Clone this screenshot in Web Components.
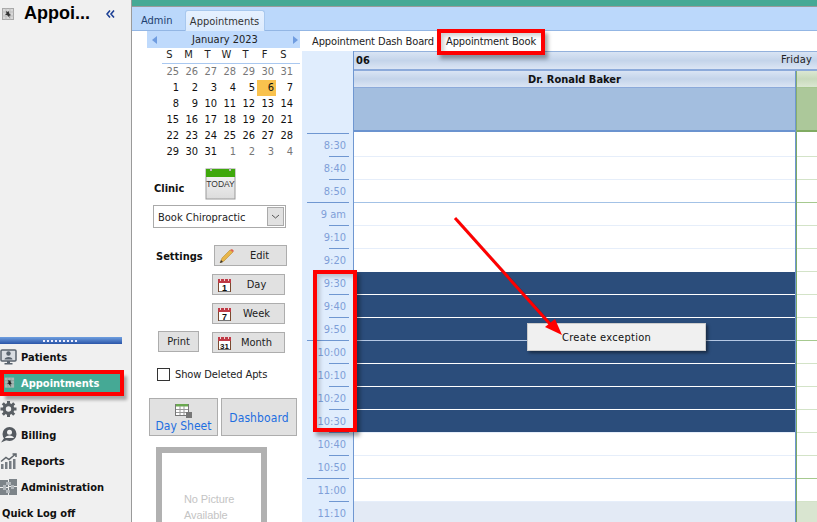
<!DOCTYPE html>
<html><head><meta charset="utf-8"><style>
html,body{margin:0;padding:0;height:100%;overflow:hidden;background:#fff}
body{font:11px "DejaVu Sans Condensed","DejaVu Sans",sans-serif;color:#111}
</style></head><body>
<app-shell></app-shell>
<script>
const $=(h)=>{const t=document.createElement('template');t.innerHTML=h;return t.content};
class Base extends HTMLElement{constructor(){super();this.attachShadow({mode:'open'}).append($(this.html()))}}
const F='"DejaVu Sans Condensed","DejaVu Sans",sans-serif';
const mosaic=`<rect x=".5" y=".5" width="11" height="11" fill="#d8d8d8" stroke="#a8a8a8"/><path d="M4 .5v11M8 .5v11M.5 4h11M.5 8h11" stroke="#bdbdbd"/><path d="M4 3l1.500 1 1-1 1 3 1.500 1-2 1 1 2-3-3-2 0 1.500-1.500z" fill="#333"/>`;

class SideNav extends Base{html(){
const icons={
P:'<rect x="1" y="1" width="15" height="11" rx="1" fill="#d9dde2" stroke="#59636e" stroke-width="1.500"/><circle cx="8.500" cy="4.500" r="2.200" fill="#59636e"/><path d="M4.500 10.500c0-3.500 8-3.500 8 0z" fill="#59636e"/><rect x="7" y="12" width="3" height="2" fill="#59636e"/><rect x="4.500" y="14" width="8" height="1.500" fill="#59636e"/>',
A:'<rect x="1" y="1" width="12" height="13" fill="#a8b8b4"/><path d="M5 1v13M9 1v13M1 5h12M1 9h12" stroke="#88a09a"/><path d="M5 4l2 1 1-1 1 4 1 1-2 1 1 3-3-4-2 0 2-2z" fill="#222"/>',
R:'<circle cx="8.500" cy="8" r="4.300" fill="none" stroke="#5a5f64" stroke-width="3.200"/><g stroke="#5a5f64" stroke-width="3"><path d="M8.500 0v3M8.500 13v3M.5 8h3M13.500 8h3M2.800 2.300l2.200 2.200M12 11.500l2.200 2.200M14.200 2.300l-2.200 2.200M5 11.500l-2.200 2.200"/></g>',
B:'<circle cx="9.500" cy="7" r="7" fill="#555a60"/><circle cx="9.500" cy="5.300" r="2.500" fill="#f0f0f0"/><path d="M5 11c.8-3.500 8.200-3.500 9 0z" fill="#f0f0f0"/><path d="M4.500 10.500L1 15.500l6-2.500z" fill="#555a60"/>',
O:'<g fill="#777d83"><rect x="1" y="11" width="2.500" height="5"/><rect x="5" y="9" width="2.500" height="7"/><rect x="9" y="8" width="2.500" height="8"/><rect x="13" y="6" width="2.500" height="10"/></g><path d="M1 8.500l5-4 3 2 6-5M12.500 1h3.500v3" fill="none" stroke="#5f656b" stroke-width="1.500"/>',
D:'<g fill="#7d8489"><rect x="0" y="1" width="8" height="7"/><rect x="9" y="0" width="8" height="7"/><rect x="0" y="9" width="8" height="7"/><rect x="9" y="8" width="8" height="8"/></g><g fill="#b4b9bd"><rect x="6" y="3" width="5" height="3"/><rect x="3" y="6" width="3" height="5"/><rect x="11" y="6" width="3" height="4"/><rect x="6" y="11" width="4" height="3"/></g>'};
const row=(k,t,c='')=>`<div class="row ${c}"><svg width="18" height="16" viewBox="0 0 18 16">${icons[k]}</svg><span>${t}</span></div>`;
return `<style>
:host{display:flex;flex-direction:column;width:131px;height:100%;background:#f0f0f0;border-right:1px solid #9a9a9a;flex:none;box-sizing:content-box}
.head{display:flex;align-items:center;height:24px;padding:0 0 0 2px;margin-top:1px;font:700 18px "Liberation Sans",sans-serif;color:#000}
.head b{margin-left:10px;flex:1}
.head svg.c{margin-right:16px;margin-top:2px}
.grow{flex:1}
.split{height:7px;width:122px;background:linear-gradient(#6f9fe0,#2a55a8);display:flex;justify-content:center;align-items:center;flex:none}
.split u{width:36px;height:2px;background:repeating-linear-gradient(90deg,#eef 0 2px,transparent 2px 4px)}
.row{height:26px;display:flex;align-items:center;gap:3px;box-sizing:border-box;font:700 11px ${F};color:#111;flex:none}
.row.on{background:#45a995;color:#fff;margin:4px;height:18px;width:116px;box-shadow:0 0 0 4px #f00,4px 5px 3px 3px rgba(0,0,0,.3)}
.row.on svg{width:14px;margin-left:0}
.q{padding-left:2px;margin-bottom:-4px}
</style>
<div class="head"><svg width="12" height="12" viewBox="0 0 12 12" style="margin-top:2px">${mosaic}</svg><b>Appoi...</b><svg class="c" width="9" height="8" viewBox="0 0 9 8"><path d="M4 .5L1 4l3 3.500M8 .5L5 4l3 3.500" fill="none" stroke="#1b3f94" stroke-width="1.600"/></svg></div>
<div class="grow"></div>
<div class="split"><u></u></div>
${row('P','Patients')}${row('A','Appointments','on')}${row('R','Providers')}${row('B','Billing')}${row('O','Reports')}${row('D','Administration')}
<div class="row q">Quick Log off</div>`}}
customElements.define('side-nav',SideNav);

class TopTabs extends Base{html(){return `<style>
:host{display:block;flex:none}
.teal{height:6px;background:#45a995;border-bottom:1px solid #9a9a9a}
.strip{height:23px;background:#bbd8fb;border-bottom:1px solid #93b6e4;display:flex;align-items:flex-end;padding-left:2px;color:#1d3f6f;font:11px ${F}}
.t{height:20px;display:flex;align-items:center;padding:1px 7px 0;box-sizing:border-box}
.t.on{background:linear-gradient(#e6f1ff,#dcebfd);border:1px solid #a8c8ee;border-bottom:none;border-radius:3px 3px 0 0;margin-bottom:-1px;padding:1px 0 0;justify-content:center;width:80px;margin-left:5px;height:21px;color:#333}
</style><div class="teal"></div><div class="strip"><div class="t">Admin</div><div class="t on">Appointments</div></div>`}}
customElements.define('top-tabs',TopTabs);

class MiniCal extends Base{html(){
const d=[25,26,27,28,29,30,31,1,2,3,4,5,6,7,8,9,10,11,12,13,14,15,16,17,18,19,20,21,22,23,24,25,26,27,28,29,30,31,1,2,3,4];
const cells=d.map((n,i)=>`<span class="${(i<7||i>37)?'o':''} ${i==12?'s':''}">${n}</span>`).join('');
const dow='SMTWTFS'.split('').map(x=>`<span>${x}</span>`).join('');
return `<style>
:host{display:block;width:153px;margin-left:15px;font:11px ${F}}
.h{height:17px;background:#bfdafc;display:flex;align-items:center;justify-content:space-between;padding:0 2px 0 5px;color:#222}
.h svg{display:block}
.dow{display:grid;grid-template-columns:repeat(7,19px);margin-left:15px;border-bottom:1px solid #a9c8f0;height:15px;line-height:14px;text-align:center;color:#222}
.dow span{padding-right:4px}
.grid{display:grid;grid-template-columns:repeat(7,19px);grid-auto-rows:16px;margin-left:15px;text-align:right;line-height:16px;color:#111}
.grid span{padding-right:2px}
.o{color:#777}.s{background:#f9c24e}
</style><div class="h"><svg width="5" height="8"><path d="M5 0v8L0 4z" fill="#6f9ce0"/></svg><span>January 2023</span><svg width="5" height="8"><path d="M0 0v8l5-4z" fill="#6f9ce0"/></svg></div>
<div class="dow">${dow}</div><div class="grid">${cells}</div>`}}
customElements.define('mini-cal',MiniCal);

class ToolBtn extends Base{html(){return `<style>
:host{display:flex;align-items:center;box-sizing:border-box;background:#e1e1e1;border:1px solid #adadad;color:#222;font:11px ${F};height:21px}
</style><slot></slot>`}}
customElements.define('tool-btn',ToolBtn);

class LeftPanel extends Base{html(){
const bt=(ic,t)=>`<tool-btn style="width:73px;padding-left:4px">${ic}<span style="flex:1;text-align:center;padding-right:3px">${t}</span></tool-btn>`;
const cIc=n=>`<svg width="15" height="14" viewBox="0 0 15 14" style="flex:none"><rect x="1" y="2" width="13" height="12" fill="#fff"/><rect x="1" y="1" width="13" height="4" fill="#bf3a46"/><g fill="#f0d8d8"><rect x="3" y="0" width="1" height="3"/><rect x="7" y="0" width="1" height="3"/><rect x="11" y="0" width="1" height="3"/></g><rect x="1" y="5" width="1" height="9" fill="#7a4a30"/><rect x="13" y="5" width="1" height="9" fill="#7a4a30"/><rect x="2" y="13" width="11" height="1" fill="#777"/><text x="7.500" y="13" text-anchor="middle" font-family="Liberation Sans" font-weight="700" font-size="${n>9?8:9}" fill="#111">${n}</text></svg>`;
return `<style>
:host{display:block;width:170px;flex:none;background:#fff;overflow:hidden;font:11px ${F};color:#222}
.clinic{display:flex;height:36px;margin-top:6px;padding-left:22px;align-items:center}
.clinic b{width:35px;font-weight:700;color:#111;margin-top:8px;margin-right:16px}
.sel{margin:3px 0 0 21px;width:133px;height:23px;box-sizing:border-box;border:1px solid #aaa;display:flex;align-items:center;padding-left:4px;justify-content:space-between;background:#fff;color:#222}
.sel span{padding-top:2px}
.sel u{text-decoration:none;width:17px;height:19px;background:#e1e1e1;border:1px solid #aaa;box-sizing:border-box;margin-right:1px;display:flex;align-items:center;justify-content:center}
.set{display:flex;align-items:center;margin:17px 0 0 24px;height:21px}
.set b{color:#111;width:58px;margin-top:2px}
.r{display:flex;justify-content:flex-end;margin:8px 0 0;padding-right:17px}
.r.p{justify-content:space-between;padding-left:26px;align-items:flex-start}
.chk{display:flex;align-items:center;gap:5px;margin:15px 0 0 25px;height:13px;letter-spacing:-.1px}
.chk i{width:13px;height:13px;border:1px solid #333;box-sizing:border-box;background:#fff}
.bb{display:flex;gap:3px;margin:17px 0 0 17px}
.bb div{background:#e1e1e1;border:1px solid #adadad;box-sizing:border-box;height:38px;color:#1d6ee0;font-size:12px;display:flex;flex-direction:column;align-items:center;justify-content:center}
.pic{margin:11px 0 0 24px;width:111px;height:90px;box-sizing:border-box;border:6px solid #b1b1b1;border-bottom:none;color:#c4c4c4;font:11px/16px "Liberation Sans",sans-serif;padding:38px 0 0 22px;background:#fff;letter-spacing:-.1px}
</style>
<mini-cal></mini-cal>
<div class="clinic"><b>Clinic</b><svg width="31" height="32" viewBox="0 0 31 32"><defs><linearGradient id="g" x1="0" y1="0" x2="0" y2="1"><stop offset="0" stop-color="#f8f8f8"/><stop offset="1" stop-color="#dcdcdc"/></linearGradient></defs><rect x="1" y="1" width="29" height="30" fill="url(#g)" stroke="#999"/><rect x="1" y="1" width="29" height="8" fill="#3fa80c"/><rect x="5" y="0" width="2" height="3" fill="#bbb"/><rect x="24" y="0" width="2" height="3" fill="#bbb"/><text x="15.500" y="19" text-anchor="middle" font-family="Liberation Sans" font-size="8.500" fill="#333">TODAY</text></svg></div>
<div class="sel"><span>Book Chiropractic</span><u><svg width="9" height="5"><path d="M1 1l3.500 3L8 1" fill="none" stroke="#555"/></svg></u></div>
<div class="set"><b>Settings</b><tool-btn style="width:73px;padding-left:4px"><svg width="16" height="14" viewBox="0 0 16 14" style="flex:none"><path d="M1 14l2-5 8-8 3 2-9 9z" fill="#e8b64a" stroke="#b08020" stroke-width=".5"/><path d="M11 1l2-1 2 2-1 1z" fill="#e0604c"/><path d="M1 14l1-3 2 2z" fill="#333"/></svg><span style="flex:1;text-align:center;padding-right:2px">Edit</span></tool-btn></div>
<div class="r">${bt(cIc(1),'Day')}</div>
<div class="r">${bt(cIc(7),'Week')}</div>
<div class="r p"><tool-btn style="width:41px;justify-content:center;margin-top:-1px">Print</tool-btn>${bt(cIc(31),'Month')}</div>
<div class="chk"><i></i><span>Show Deleted Apts</span></div>
<div class="bb"><div style="width:69px;justify-content:flex-start;padding-top:4px"><svg width="17" height="15" viewBox="0 0 17 15" style="flex:none"><rect x=".5" y="1.500" width="13" height="11" fill="#fff" stroke="#777"/><rect x="1" y="1" width="12" height="2.500" fill="#6aa84f"/><path d="M1 6.500h12M1 9.500h12M5 3v9M9 3v9" stroke="#999"/><rect x="11" y="9" width="6" height="6" fill="#777"/></svg><span style="line-height:14px;margin-top:1px">Day Sheet</span></div><div style="width:76px;padding-top:1px;letter-spacing:.1px">Dashboard</div></div>
<div class="pic">No Picture<br>Available</div>`}}
customElements.define('left-panel',LeftPanel);

class SchedGrid extends Base{html(){
const labels=['8:30','8:40','8:50','9 am','9:10','9:20','9:30','9:40','9:50','10:00','10:10','10:20','10:30','10:40','10:50','11:00','11:10'];
const hour=i=>labels[i].endsWith(':00')||labels[i]=='9 am'||i==0;
const times=labels.map((l,i)=>`<div class="tm ${hour(i)?'hr':''}">${l}</div>`).join('');
const rows=labels.map((l,i)=>{const sel=i>=6&&i<=12,off=i==16;const h=hour(i);
return `<div class="rw ${sel?'sel':''} ${off?'off':''} ${h?'hr':''} ${i==6?'f':''} ${i==0?'first':''}"><div class="m"></div><div class="g"></div></div>`}).join('');
return `<style>
:host{display:block;flex:1;position:relative;font:11px ${F};min-width:0}
.tabs{height:20px;display:flex;align-items:center;padding:1px 0 0 10px;gap:12px;color:#222;background:#fff;box-sizing:border-box;letter-spacing:-.12px}
.tabs span:first-child{width:122px;flex:none;white-space:nowrap}
.body{display:flex;height:471px;overflow:hidden}
.times{width:51px;background:#e0edfd;border-right:1px solid #6f97d1;flex:none;padding-top:82px;box-sizing:content-box}
.tm{height:23px;box-sizing:border-box;border-top:1px solid transparent;color:#7f9fd8;text-align:right;padding-right:7px;line-height:24px;position:relative;font-size:11px}
.tm::before{content:"";position:absolute;right:4px;top:-1px;width:20px;height:1px;background:#6f97d1}
.tm.hr::before{width:42px}
.main{flex:1;min-width:0;display:flex;flex-direction:column}
.day{height:17px;flex:none;background:linear-gradient(#d9e4f4,#c4d4ea 50%,#dbe5f4);border-top:1px solid #93b1dc;border-bottom:2px solid #8caada;display:flex;justify-content:space-between;align-items:center;padding:0 5px 0 2px;color:#222}
.day b{font-weight:700;color:#111}
.day span{margin-top:-2px;letter-spacing:.2px}
.cols{display:flex;height:17px;flex:none}
.doc{flex:1;background:linear-gradient(#d9e4f4,#c4d4ea 50%,#dbe5f4);border-bottom:1px solid #8caada;text-align:center;font-weight:700;color:#111;line-height:18px}
.sep{width:2px;background:linear-gradient(90deg,#6f97d1 50%,#86ad6e 50%)}
.gc{width:20px;background:linear-gradient(#dbe7d2,#c8dabc 50%,#dbe7d2);border-bottom:1px solid #a6c590}
.all{display:flex;height:44px;flex:none}
.all .a{flex:1;background:#a3bedf;border-bottom:2px solid #6b93cf}
.all .gg{width:20px;background:#acc89a;border-bottom:2px solid #80ab62}
.rows{position:relative;flex:1;min-height:0;padding-top:1px}
.rw{height:23px;display:flex;box-sizing:border-box;border-top:1px solid transparent}
.rw .m{flex:1;margin-top:-1px;border-top:1px solid #e6eefa;background:#fff}
.rw .g{width:20px;margin-top:-1px;margin-left:2px;border-top:1px solid #d3e3c8;background:#fff}
.rw.hr .m{border-top-color:#a3c2e6}
.rw.hr .g{border-top-color:#a6c98f}
.rw.first .m,.rw.first .g{border-top-color:transparent}
.rw.sel .m{background:#2b4d7b;border-top-color:#fff}
.rw.sel.hr .m{border-top-color:#b5c8e4}
.rw.off .m{background:#e3eaf5}.rw.off .g{background:#d9e5d0}
.line{position:absolute;top:0;bottom:0;right:20px;width:2px;background:linear-gradient(90deg,#6f97d1 50%,#7eaa68 50%)}
.red{position:absolute;border:4px solid #f00;box-sizing:border-box;box-shadow:3px 4px 4px rgba(0,0,0,.35),inset 3px 3px 4px rgba(0,0,0,.18)}
.menu{position:absolute;width:179px;height:28px;box-sizing:border-box;background:#f0f0f0;border:1px solid #ccc;box-shadow:2px 2px 3px rgba(0,0,0,.45);color:#111;padding-left:34px;line-height:27px;letter-spacing:.3px}
.arrow{position:absolute;left:0;top:0;pointer-events:none}
</style>
<div class="tabs"><span>Appointment Dash Board</span><span>Appointment Book</span></div>
<div class="body"><div class="times">${times}</div>
<div class="main"><div class="day"><b>06</b><span>Friday</span></div>
<div class="cols"><div class="doc">Dr. Ronald Baker</div><div class="sep"></div><div class="gc"></div></div>
<div class="all"><div class="a"></div><div class="sep"></div><div class="gg"></div></div>
<div class="rows">${rows}<div class="line"></div></div></div></div>
<div class="red" style="left:135px;top:-2px;width:108px;height:26px"></div>
<div class="red" style="left:11px;top:239px;width:44px;height:162px"></div>
<div class="menu" style="left:225px;top:292px">Create exception</div>
<svg class="arrow" width="515" height="491"><g transform="translate(-302,-31)"><path d="M455 218L552 326" stroke="rgba(0,0,0,.22)" stroke-width="3" transform="translate(2,2)"/><path d="M455 218L550 324" stroke="#f00" stroke-width="3"/><path d="M562 335L545 327L555 319Z" fill="#f00"/></g></svg>`}}
customElements.define('sched-grid',SchedGrid);

class AppShell extends Base{html(){return `<style>
:host{display:flex;width:817px;height:522px;overflow:hidden}
.r{flex:1;display:flex;flex-direction:column;min-width:0}
.c{flex:1;display:flex;min-height:0}
</style><side-nav></side-nav><div class="r"><top-tabs></top-tabs><div class="c"><left-panel></left-panel><sched-grid></sched-grid></div></div>`}}
customElements.define('app-shell',AppShell);
</script></body></html>
